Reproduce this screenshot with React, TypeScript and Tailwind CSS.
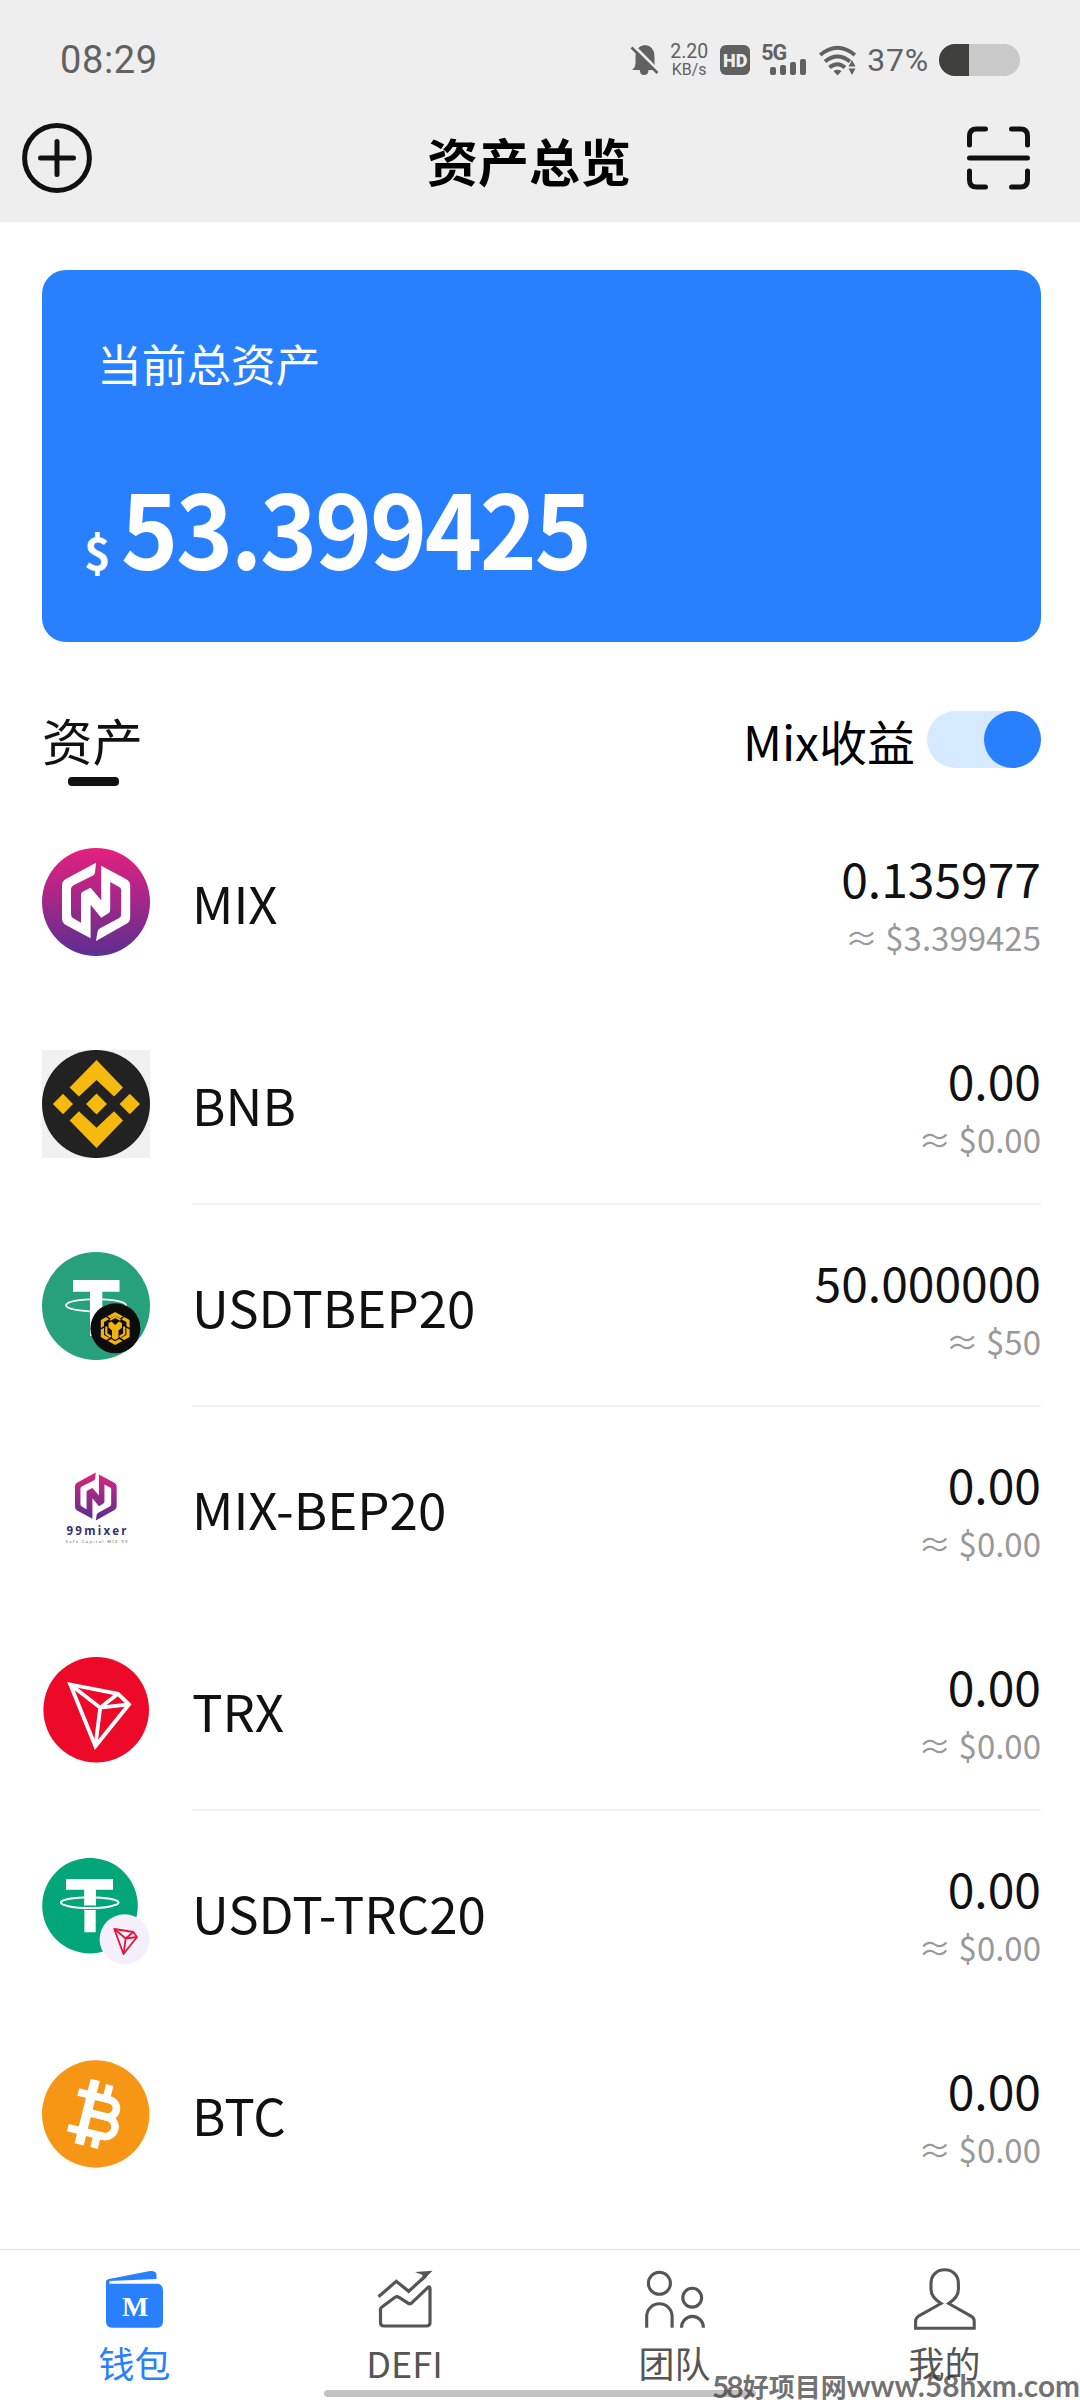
import React from 'react';

const MARK_PATH =
  'M54 14.7L53 24.7Q52.6 27 50 28L32 37Q29 38.6 29 41V66Q29 69 31.3 70.3L39 74.7V46.5Q39 44.4 41 43.4L48.6 39.7L59.2 52.3V17.7L84.4 31.3Q88.2 33.5 88.2 37.5V69.3Q88.2 73.5 85.4 75.3L54 93L55.5 83.7Q56 81.5 58 80.3L76.8 70.3Q79.2 69 79.2 66V42Q79.2 39.8 76.8 38.7L68.2 34V62Q68.2 64.2 66.5 65.3L59.2 69.7L48.6 56.7V90.3L23.4 76.7Q20 74.5 20 70.3V37.5Q20 33.3 23.4 31.3Z';

const MixIcon = () => (
  <svg viewBox="0 0 108 108" className="size-[108px]">
    <defs>
      <linearGradient id="mix" x1="0" y1="0" x2="0" y2="1">
        <stop offset="0" stopColor="#e5207f" />
        <stop offset="1" stopColor="#5c2f91" />
      </linearGradient>
    </defs>
    <circle cx="54" cy="54" r="54" fill="url(#mix)" />
    <path d={MARK_PATH} fill="#fff" />
  </svg>
);

const BnbIcon = () => (
  <svg viewBox="0 0 108 108" className="size-[108px] bg-[#f1f1f1]">
    <circle cx="54" cy="54" r="54" fill="#222" />
    <g fill="#f6b90d">
      <path d="M54.5 10L81 37.5L72 46.5L54.5 30L36.9 46.5L27.6 37.5Z" />
      <path d="M54.5 98L81 70.5L72 61.3L54.5 77.8L36.9 61.3L27.6 70.5Z" />
      <path d="M54.5 43.5L65 54L54.5 64.5L44 54Z" />
      <path d="M21 43.8L31 54L21 64.2L10.8 54Z" />
      <path d="M87.8 43.8L98 54L87.8 64.2L77.6 54Z" />
    </g>
  </svg>
);

const UsdtBepIcon = () => (
  <svg viewBox="0 0 108 108" className="size-[108px]">
    <circle cx="54" cy="54" r="54" fill="#27a17c" />
    <path d="M31 28H77.5V39.8H60.3V84H48V39.8H31Z" fill="#fff" />
    <ellipse cx="54" cy="53.3" rx="30" ry="6.2" fill="none" stroke="#fff" strokeWidth="1.7" />
    <circle cx="73.4" cy="76.3" r="25" fill="#0c0c0c" />
    <path d="M73.2 61.8L86 69V84L73.2 91.2L60.4 84V69Z" fill="none" stroke="#f0b40f" strokeWidth="3.2" />
    {/* Face: wide at the top, narrow at the bottom */}
    <path d="M66.5 71L69.5 69.5L73.2 73L77 69.5L80 71V75.5L76.5 78.5V86L73.2 88L70 86V78.5L66.5 75.5Z" fill="#f0b40f" />
    <path d="M68 68L73.2 65L78.5 68" fill="none" stroke="#f0b40f" strokeWidth="2" />
    <path d="M64.3 74.5V82L69 85M82.2 74.5V82L77.5 85" fill="none" stroke="#f0b40f" strokeWidth="2.2" />
    <path d="M58.5 76.8L63 74.5M88 76.8L83.5 74.5M65 88.5L69.5 86M81.5 88.5L77 86M64.5 64.5L68 67M82 64.5L78.5 67" stroke="#0c0c0c" strokeWidth="1.5" />
  </svg>
);

const MixBepIcon = () => (
  <svg viewBox="0 0 108 108" className="size-[108px]">
    <defs>
      <linearGradient id="mixbep" x1="0" y1="0" x2="0" y2="1">
        <stop offset="0" stopColor="#dc2580" />
        <stop offset="1" stopColor="#54308f" />
      </linearGradient>
    </defs>
    <path d={MARK_PATH} fill="url(#mixbep)" transform="translate(20.7 9.6) scale(0.612)" />
    <text x="24.5" y="81.2" fontSize="11.5" fontWeight="700" fill="#37306f" textLength="60" fontFamily="Noto Sans">
      99mixer
    </text>
    <text x="23.5" y="88.5" fontSize="4.2" fill="#666" textLength="62" fontFamily="Noto Sans">
      Safe Capital MIX 99
    </text>
  </svg>
);

const TrxIcon = () => (
  <svg viewBox="0 0 108 108" className="size-[108px]">
    <circle cx="54.2" cy="53.7" r="52.8" fill="#ec0a28" />
    <g fill="none" stroke="#fff" strokeWidth="3.8" strokeLinejoin="miter">
      <path d="M28.3 28.5L76 37.8L87 48.3L53.4 90.3Z" />
      <path d="M28.3 28.5L58.2 51.7L76 37.8M58.2 51.7L87 48.3M58.2 51.7L53.4 90.3" />
    </g>
  </svg>
);

const UsdtTrcIcon = () => (
  <svg viewBox="0 0 108 108" className="size-[108px]">
    <circle cx="48" cy="47.7" r="47.8" fill="#03a678" />
    <path d="M24 21H71V31.8H53.7V74.3H42.4V31.8H24Z" fill="#fff" />
    <path d="M42.4 47H53.7V52H42.4Z" fill="#03a678" />
    <path d="M42.4 31.8H53.7V47.5H42.4Z" fill="#fff" />
    <ellipse cx="47.7" cy="44.6" rx="28.8" ry="5.4" fill="none" stroke="#fff" strokeWidth="2" />
    <circle cx="82.6" cy="81.3" r="25" fill="#f5effb" />
    <g fill="none" stroke="#e0173a" strokeWidth="1.8" strokeLinejoin="round">
      <path d="M72.3 71L91.3 74L95 79L81.5 96Z" />
      <path d="M72.3 71L83.7 80.5L91.3 74M83.7 80.5L95 79M83.7 80.5L81.5 96" />
    </g>
  </svg>
);

const BtcIcon = () => (
  <svg viewBox="0 0 108 108" className="size-[108px]">
    <circle cx="53.7" cy="54" r="53.7" fill="#f79514" />
    <g transform="rotate(14 54 54)" fill="none" stroke="#fff" strokeWidth="7.6">
      <path d="M31.5 37H64A8.7 8.7 0 0 1 64 54.4H44" />
      <path d="M64 54.4H66A9.8 9.8 0 0 1 66 74H30" />
      <path d="M45 21V87.5" strokeWidth="9.4" />
      <path d="M60.3 22.5V37M60.3 74V87.5" strokeWidth="7.6" />
    </g>
  </svg>
);

const assets = [
  { name: 'MIX', amount: '0.135977', value: '$3.399425', icon: <MixIcon />, line: false },
  { name: 'BNB', amount: '0.00', value: '$0.00', icon: <BnbIcon />, line: true },
  { name: 'USDTBEP20', amount: '50.000000', value: '$50', icon: <UsdtBepIcon />, line: true },
  { name: 'MIX-BEP20', amount: '0.00', value: '$0.00', icon: <MixBepIcon />, line: false },
  { name: 'TRX', amount: '0.00', value: '$0.00', icon: <TrxIcon />, line: true },
  { name: 'USDT-TRC20', amount: '0.00', value: '$0.00', icon: <UsdtTrcIcon />, line: false },
  { name: 'BTC', amount: '0.00', value: '$0.00', icon: <BtcIcon />, line: false },
];

const tabs = [
  {
    label: '钱包',
    active: true,
    icon: (
      <svg viewBox="0 0 70 70" className="size-[70px]">
        <path d="M6 17Q6 14.5 9 14L50 6Q56.5 5.5 56.5 10V14L9.5 16V18.8H57Q63 19 63 26V56Q63 62.7 57 62.7H12Q6 62.7 6 56Z" fill="#2980ff" />
        <text x="35.3" y="51" fontSize="28" fontWeight="700" fill="#fff" textAnchor="middle" fontFamily="Liberation Serif">
          M
        </text>
      </svg>
    ),
  },
  {
    label: 'DEFI',
    active: false,
    icon: (
      <svg viewBox="0 0 70 70" className="size-[70px]" fill="none" stroke="#555" strokeWidth="3.2">
        <path d="M8.5 31.7L26.3 16.3L38.7 26.3L56 10.5" />
        <path d="M45 7L62.5 5.7L52 16.5L52.5 10Z" fill="#555" stroke="none" />
        <path d="M10.5 44Q10.5 43 12 42L25 32.3Q27 31 29 32.3L38 38.2Q40 39.5 42 37.7L57.5 22.8Q60 20.5 60 24V57.5Q60 61 56.5 61H14Q10.5 61 10.5 57.5Z" />
      </svg>
    ),
  },
  {
    label: '团队',
    active: false,
    icon: (
      <svg viewBox="0 0 70 70" className="size-[70px]" fill="none" stroke="#555" strokeWidth="3.1">
        <circle cx="19.4" cy="18.3" r="11" />
        <circle cx="52.2" cy="32.7" r="9.4" />
        <path d="M6.7 62.7V51.5A12.7 12.7 0 0 1 32.1 51.5V62.7" />
        <path d="M41.5 62.7A10.8 11.2 0 0 1 63.4 62.7" />
      </svg>
    ),
  },
  {
    label: '我的',
    active: false,
    icon: (
      <svg viewBox="0 0 70 70" className="size-[70px]" fill="none" stroke="#555" strokeWidth="3.1">
        <path d="M31 38.5C24 34 21 30 21 24.5V18.5C21 10.5 26.5 4.8 34.7 4.8S48.4 10.5 48.4 18.5V24.5C48.4 30 45.5 34 38.7 38.5L61 51.2Q64.2 53 64.2 56V63.3H5.6V56Q5.6 53 8.5 51.2Z" />
      </svg>
    ),
  },
];

const StatusBar = () => (
  <div className="flex h-[92px] items-center pt-[28px] pr-[60px] pl-[60px] font-[Roboto,sans-serif] text-[#616161]">
    <span className="text-[38px] leading-[40px] tracking-[0.6px]">08:29</span>
    {/* Muted bell */}
    <svg viewBox="0 0 30 32" className="ml-auto h-[32px] w-[30px]">
      <path d="M3 25Q5.5 23 5.5 19.5V12.5Q5.5 2 15 1Q24.5 2 24.5 12.5V19.5Q24.5 23 27.5 26L18.5 26Q18.5 31 14 31Q9.8 31 9.8 26H2.2Z" fill="#616161" />
      <path d="M3.5 1.5L29.5 28" stroke="#eee" strokeWidth="3" />
      <path d="M1.5 3.5L27.5 29" stroke="#616161" strokeWidth="2.6" />
    </svg>
    <div className="ml-[9px] flex w-[40px] flex-col items-center">
      <span className="text-[19.5px] leading-[18px]">2.20</span>
      <span className="text-[16px] leading-[17px]">KB/s</span>
    </div>
    <div className="ml-[11px] flex h-[30px] w-[30px] items-center justify-center rounded-[6px] bg-[#616161] text-[18px] font-black text-[#eee]">
      HD
    </div>
    <div className="ml-[11px] flex h-[31px] w-[46px] flex-col">
      <span className="text-[21.5px] leading-[15px] font-bold tracking-[-1px]">5G</span>
      <div className="-mt-[1px] ml-[9px] flex items-end gap-[4px]">
        <div className="h-[8px] w-[6px] rounded-[2px] bg-[#616161]" />
        <div className="h-[10px] w-[6px] rounded-[2px] bg-[#616161]" />
        <div className="h-[13px] w-[6px] rounded-[2px] bg-[#616161]" />
        <div className="h-[16px] w-[6px] rounded-[2px] bg-[#616161]" />
      </div>
    </div>
    <svg viewBox="0 0 40 32" className="ml-[11px] h-[32px] w-[40px]" fill="none" stroke="#616161" strokeWidth="3.9">
      <path d="M2.2 11Q19.5 -3.5 36.8 11" />
      <path d="M7 17.5Q19.5 7.5 32 17.5" />
      <path d="M11.5 23.5Q19.5 17 27 23.5" />
      <path d="M15.5 27Q19.5 24.5 23.5 27L19.5 31.5Z" fill="#616161" stroke="none" />
      <path d="M34 16L37.5 22.5H30.5ZM34 31L30.5 24.5H37.5Z" fill="#616161" stroke="none" />
    </svg>
    <span className="ml-[9px] text-[32px] leading-[40px] tracking-[0.8px]">37%</span>
    <div className="ml-[10px] h-[32px] w-[81px] overflow-hidden rounded-full bg-[#c9c9c9]">
      <div className="h-full w-[30px] bg-[#3f403b]" />
    </div>
  </div>
);

export default function App() {
  return (
    <div className="relative flex h-[2400px] w-[1080px] flex-col overflow-hidden bg-white font-['Noto_Sans_CJK_SC',sans-serif] text-[#111]">
      <header className="h-[222px] bg-[#eee]">
        <StatusBar />
        <div className="flex h-[130px] items-center justify-between pt-px pr-[50px] pl-[22px]">
          <svg viewBox="0 0 70 70" className="size-[70px]" fill="none" stroke="#111" strokeWidth="5" strokeLinecap="round">
            <circle cx="35" cy="35" r="32.4" />
            <path d="M18.5 35H51.5M35 18.5V51.5" />
          </svg>
          <h1 className="pt-[4px] pr-px text-[51px] leading-[56px] font-bold text-black">资产总览</h1>
          <svg viewBox="0 0 63 64" className="h-[64px] w-[63px]" fill="none" stroke="#111" strokeWidth="5" strokeLinecap="round">
            <path d="M2.5 19V10Q2.5 3 9.5 3H18.5M44.5 3H53.5Q60.5 3 60.5 10V19M60.5 45V54Q60.5 61 53.5 61H44.5M18.5 61H9.5Q2.5 61 2.5 54V45M2.5 32H60.5" />
          </svg>
        </div>
      </header>

      <section className="mt-[48px] mr-[39px] ml-[42px] h-[372px] rounded-[24px] bg-[#2980ff] pt-[70px] text-white">
        <p className="pl-[55px] text-[44.7px] leading-[45px]">当前总资产</p>
        <div className="mt-[91px] flex items-baseline pl-[42px] font-bold">
          <span className="w-[37px] text-[45px] leading-[45px]">$</span>
          <span className="origin-[0_94px] scale-y-[1.08] text-[97px] leading-[104px] tracking-[-2.3px]">53.399425</span>
        </div>
      </section>

      <section className="mt-[69px] mr-[39px] ml-[42px] flex h-[75px] items-start justify-between">
        <div>
          <h2 className="pt-px text-[50.5px] leading-[54px]">资产</h2>
          <div className="mt-[11px] ml-[26px] h-[9px] w-[51px] rounded-[4px] bg-[#111]" />
        </div>
        <div className="flex h-[57px] items-center gap-[12px]">
          <span className="pt-px text-[48px] leading-[57px] text-black">Mix收益</span>
          <div className="flex h-[57px] w-[114px] justify-end rounded-full bg-[#d6eaff]">
            <div className="size-[57px] rounded-full bg-[#2980ff]" />
          </div>
        </div>
      </section>

      <ul className="mt-[15px] mr-[39px] ml-[42px]">
        {assets.map((asset) => (
          <li key={asset.name} className="flex h-[202px] items-center gap-[42px]">
            {asset.icon}
            <div className={`flex h-full flex-1 items-center justify-between border-b-[2px] ${asset.line ? 'border-[#f3f3f3]' : 'border-transparent'}`}>
              <span className="pt-px text-[51px] leading-[60px]">{asset.name}</span>
              <div className="flex flex-col items-end pt-[4px]">
                <span className="text-[48px] leading-[66px]">{asset.amount}</span>
                <span className="pt-px text-[33px] leading-[52px] text-[#999]">≈ {asset.value}</span>
              </div>
            </div>
          </li>
        ))}
      </ul>

      <nav className="mt-auto flex h-[151px] border-t border-[#e2e2e2]">
        {tabs.map((tab) => (
          <div key={tab.label} className="flex flex-1 flex-col items-center pt-[15px]">
            {tab.icon}
            <span className={`mt-[7px] pr-px text-[36px] leading-[40px] ${tab.active ? 'text-[#2980ff]' : 'text-[#555]'}`}>{tab.label}</span>
          </div>
        ))}
      </nav>

      {/* Gesture bar */}
      <div className="absolute bottom-[3px] left-[324px] h-[7px] w-[432px] rounded-full bg-[#c2c2c2]" />

      {/* Watermark */}
      <div className="absolute right-0 bottom-0 flex h-[28px] items-center font-bold whitespace-nowrap text-[#333]/70">
        <span className="font-[Lato,sans-serif] text-[30px] leading-[28px] tracking-[-3px]">58</span>
        <span className="ml-[2px] text-[26px] leading-[26px]">好项目网</span>
        <span className="font-[Lato,sans-serif] text-[29.8px] leading-[28px]">www.58hxm.com</span>
      </div>
    </div>
  );
}
